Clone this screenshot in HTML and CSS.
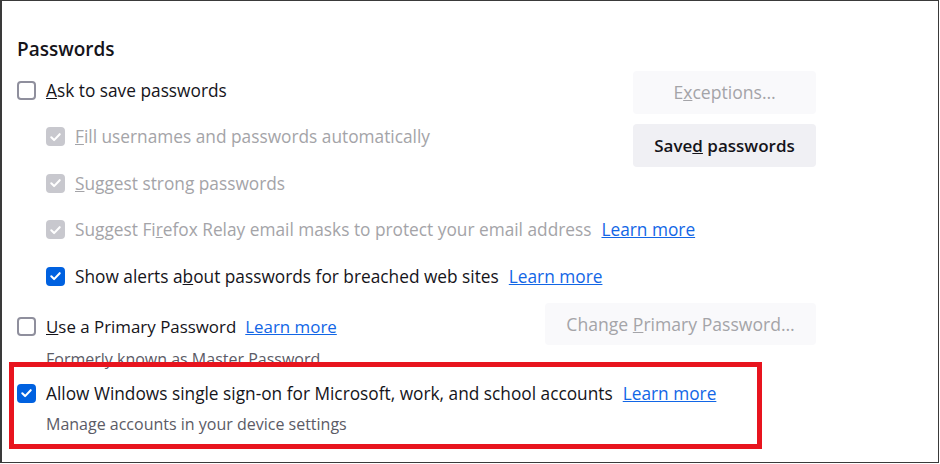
FILE: index.html
```html
<!DOCTYPE html>
<html>
<head>
<meta charset="utf-8">
<link rel="stylesheet" href="styles.css">
</head>
<body>
<div class="frame">
  <div class="content">
    <h2 class="heading">Passwords</h2>
    <div class="pw-group">
      <div class="pw-left">
        <div class="row">
          <span class="cb"></span>
          <span class="label"><u>A</u>sk to save passwords</span>
        </div>
        <div class="row sub disabled">
          <span class="cb checked dis"><svg viewBox="0 0 16 16"><path d="M3.5 8.3l3 3 6-6.3" /></svg></span>
          <span class="label"><u>F</u>ill usernames and passwords automatically</span>
        </div>
        <div class="row sub disabled">
          <span class="cb checked dis"><svg viewBox="0 0 16 16"><path d="M3.5 8.3l3 3 6-6.3" /></svg></span>
          <span class="label"><u>S</u>uggest strong passwords</span>
        </div>
        <div class="row sub disabled">
          <span class="cb checked dis"><svg viewBox="0 0 16 16"><path d="M3.5 8.3l3 3 6-6.3" /></svg></span>
          <span class="label">Suggest Fi<u>r</u>efox Relay email masks to protect your email address</span>
          <a class="link" href="#">Learn more</a>
        </div>
        <div class="row sub">
          <span class="cb checked"><svg viewBox="0 0 16 16"><path d="M3.5 8.3l3 3 6-6.3" /></svg></span>
          <span class="label">Show alerts a<u>b</u>out passwords for breached web sites</span>
          <a class="link" href="#">Learn more</a>
        </div>
      </div>
      <div class="pw-right">
        <button class="btn btn-dis"><span>E<u>x</u>ceptions…</span></button>
        <button class="btn"><span>Save<u>d</u> passwords</span></button>
      </div>
    </div>
    <div class="primary-row">
      <div class="row primary-left">
        <span class="cb"></span>
        <span class="label"><u>U</u>se a Primary Password</span>
        <a class="link link-tight" href="#">Learn more</a>
      </div>
      <button class="btn btn-dis btn-wide"><span>Change <u>P</u>rimary Password…</span></button>
    </div>
    <div class="desc formerly">Formerly known as Master Password</div>
    <div class="row sso">
      <span class="cb checked"><svg viewBox="0 0 16 16"><path d="M3.5 8.3l3 3 6-6.3" /></svg></span>
      <span class="label">Allow Windows single sign-on for Microsoft, work, and school accounts</span>
      <a class="link" href="#">Learn more</a>
    </div>
    <div class="desc manage">Manage accounts in your device settings</div>
  </div>
  <div class="highlight"></div>
</div>
</body>
</html>
```

FILE: styles.css
```css
* { box-sizing: border-box; }
html, body { margin: 0; padding: 0; background: #fff; }
body {
  font-family: "Open Sans", "Noto Sans", sans-serif;
  color: #15141a;
}
.frame {
  position: relative;
  width: 939px;
  height: 463px;
  border: 1px solid #3a3a3a;
  border-left: 2px solid #3a3a3a;
  overflow: hidden;
}
.content {
  padding: 36px 122px 0 15px;
  font-size: 17.3px;
}
.heading {
  margin: 0;
  font-size: 19px;
  font-weight: 600;
  line-height: 24px;
  height: 29.75px;
}
.pw-group {
  display: flex;
  align-items: flex-start;
}
.pw-left { flex: 1; min-width: 0; }
.pw-right {
  flex: none;
  display: flex;
  flex-direction: column;
  gap: 10px;
  padding-top: 4px;
}
.row {
  display: flex;
  align-items: center;
  height: 46.5px;
}
.row.sub { padding-left: 29px; }
.cb {
  flex: none;
  width: 19px;
  height: 19px;
  border: 2px solid #8f8f9d;
  border-radius: 4px;
  margin-right: 10px;
  display: flex;
  align-items: center;
  justify-content: center;
}
.cb svg { width: 16px; height: 16px; }
.cb path {
  fill: none;
  stroke: #fff;
  stroke-width: 2.2;
  stroke-linecap: round;
  stroke-linejoin: round;
}
.cb.checked {
  background: #0061e0;
  border-color: #0061e0;
}
.cb.checked.dis {
  background: #c8c8ce;
  border-color: #c8c8ce;
}
.label { white-space: nowrap; }
.disabled .label { color: #a4a4a8; }
.link {
  color: #1266e6;
  text-decoration: underline;
  margin-left: 10px;
  white-space: nowrap;
}
.btn {
  font-family: inherit;
  font-size: 17px;
  font-weight: 600;
  color: #15141a;
  background: #f0f0f4;
  border: none;
  border-radius: 4px;
  width: 183px;
  height: 43px;
  padding: 0;
}
.btn-dis {
  background: #f9f9fb;
  color: #a4a4a8;
  font-weight: 400;
  font-size: 17.6px;
}
.btn-wide { width: 271px; height: 42px; }
.primary-row {
  display: flex;
  justify-content: space-between;
  align-items: center;
  margin-top: 3.75px;
  height: 42px;
}
.primary-left { height: 42px; padding-top: 4px; font-size: 16.9px; }
.link-tight { margin-left: 9px; }
.desc {
  color: #5b5b66;
  padding-left: 29px;
  line-height: 22px;
  font-size: 16px;
}
.formerly { margin-top: 3px; }
.row.sso { height: 24px; margin-top: 11px; }
.manage { margin-top: 8px; }
.highlight {
  position: absolute;
  left: 7px;
  top: 361px;
  width: 753px;
  height: 87px;
  border: 5px solid #e8141e;
  pointer-events: none;
}
```
